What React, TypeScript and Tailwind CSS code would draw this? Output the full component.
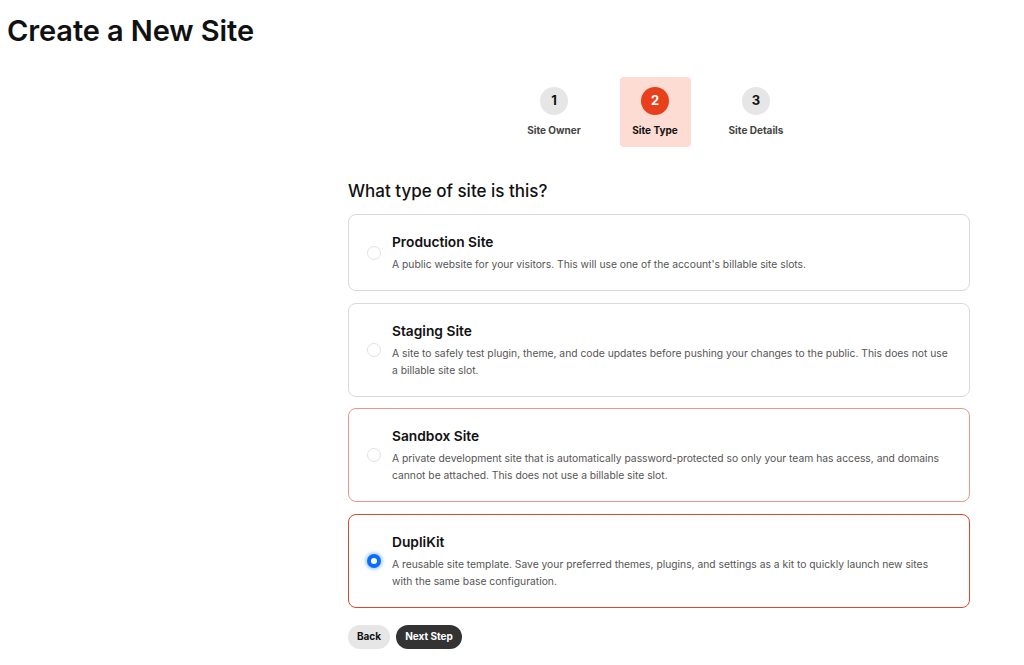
import React from "react";

const font = { fontFamily: "Inter, 'Noto Sans', sans-serif" };

const steps = [
  { n: "1", label: "Site Owner", active: false },
  { n: "2", label: "Site Type", active: true },
  { n: "3", label: "Site Details", active: false },
];

const options = [
  {
    title: "Production Site",
    desc: "A public website for your visitors. This will use one of the account's billable site slots.",
    state: "idle",
  },
  {
    title: "Staging Site",
    desc: "A site to safely test plugin, theme, and code updates before pushing your changes to the public. This does not use a billable site slot.",
    state: "idle",
  },
  {
    title: "Sandbox Site",
    desc: "A private development site that is automatically password-protected so only your team has access, and domains cannot be attached. This does not use a billable site slot.",
    state: "hover",
  },
  {
    title: "DupliKit",
    desc: "A reusable site template. Save your preferred themes, plugins, and settings as a kit to quickly launch new sites with the same base configuration.",
    state: "selected",
  },
];

export default function App() {
  return (
    <div className="min-h-screen bg-white text-[#111]" style={font}>
      <h1 className="pl-[7px] pt-[15px] text-[29px] leading-[32px] font-semibold tracking-[-0.1px]">
        Create a New Site
      </h1>
      <div className="ml-[348px] w-[622px]">
        <div className="mt-[30px] flex justify-center gap-[30px] pr-[8px]">
          {steps.map((s) => (
            <div
              key={s.n}
              className={
                "flex h-[70px] w-[71px] flex-col items-center rounded-[4px] pt-[10px] " +
                (s.active ? "bg-[#fddcd4]" : "")
              }
            >
              <div
                className={
                  "flex h-[28px] w-[28px] items-center justify-center rounded-full text-[13px] font-bold " +
                  (s.active ? "bg-[#e8401c] text-white" : "bg-[#e6e6e6] text-[#111]")
                }
              >
                {s.n}
              </div>
              <div
                className={
                  "mt-[9px] text-[10px] leading-[12px] font-bold whitespace-nowrap " +
                  (s.active ? "text-[#111]" : "text-[#444]")
                }
              >
                {s.label}
              </div>
            </div>
          ))}
        </div>
        <h2 className="mt-[32px] text-[17px] leading-[24px] font-medium">What type of site is this?</h2>
        <div className="mt-[11px] flex flex-col gap-[11.5px]">
          {options.map((o) => (
            <div
              key={o.title}
              className={
                "flex items-center rounded-[8px] bg-white pt-[17px] pb-[17px] pr-[18px] " +
                (o.state === "selected"
                  ? "border-[1.5px] border-[#d9482b]"
                  : o.state === "hover"
                  ? "border border-[#e39a88]"
                  : "border border-[#d9d9d9]")
              }
            >
              <div className="flex w-[43px] shrink-0 justify-end pr-[11px]">
                {o.state === "selected" ? (
                  <div className="flex h-[14px] w-[14px] items-center justify-center rounded-full bg-[#0a6cff] shadow-[0_0_3px_2px_rgba(10,108,255,0.3)]">
                    <div className="h-[6px] w-[6px] rounded-full bg-white" />
                  </div>
                ) : (
                  <div className="h-[14px] w-[14px] rounded-full border border-[#e2e2e2] bg-white" />
                )}
              </div>
              <div className="flex flex-col">
                <div className="text-[13.75px] leading-[20px] font-semibold">{o.title}</div>
                <div className="mt-[4px] text-[10.3px] leading-[17px] text-[#555]">{o.desc}</div>
              </div>
            </div>
          ))}
        </div>
        <div className="mt-[17px] flex gap-[6px]">
          <button className="h-[24px] w-[42px] rounded-full bg-[#e6e6e6] text-[10px] font-bold text-[#111]">
            Back
          </button>
          <button className="h-[24px] w-[66px] rounded-full bg-[#333] text-[10px] font-bold text-white">
            Next Step
          </button>
        </div>
      </div>
    </div>
  );
}
